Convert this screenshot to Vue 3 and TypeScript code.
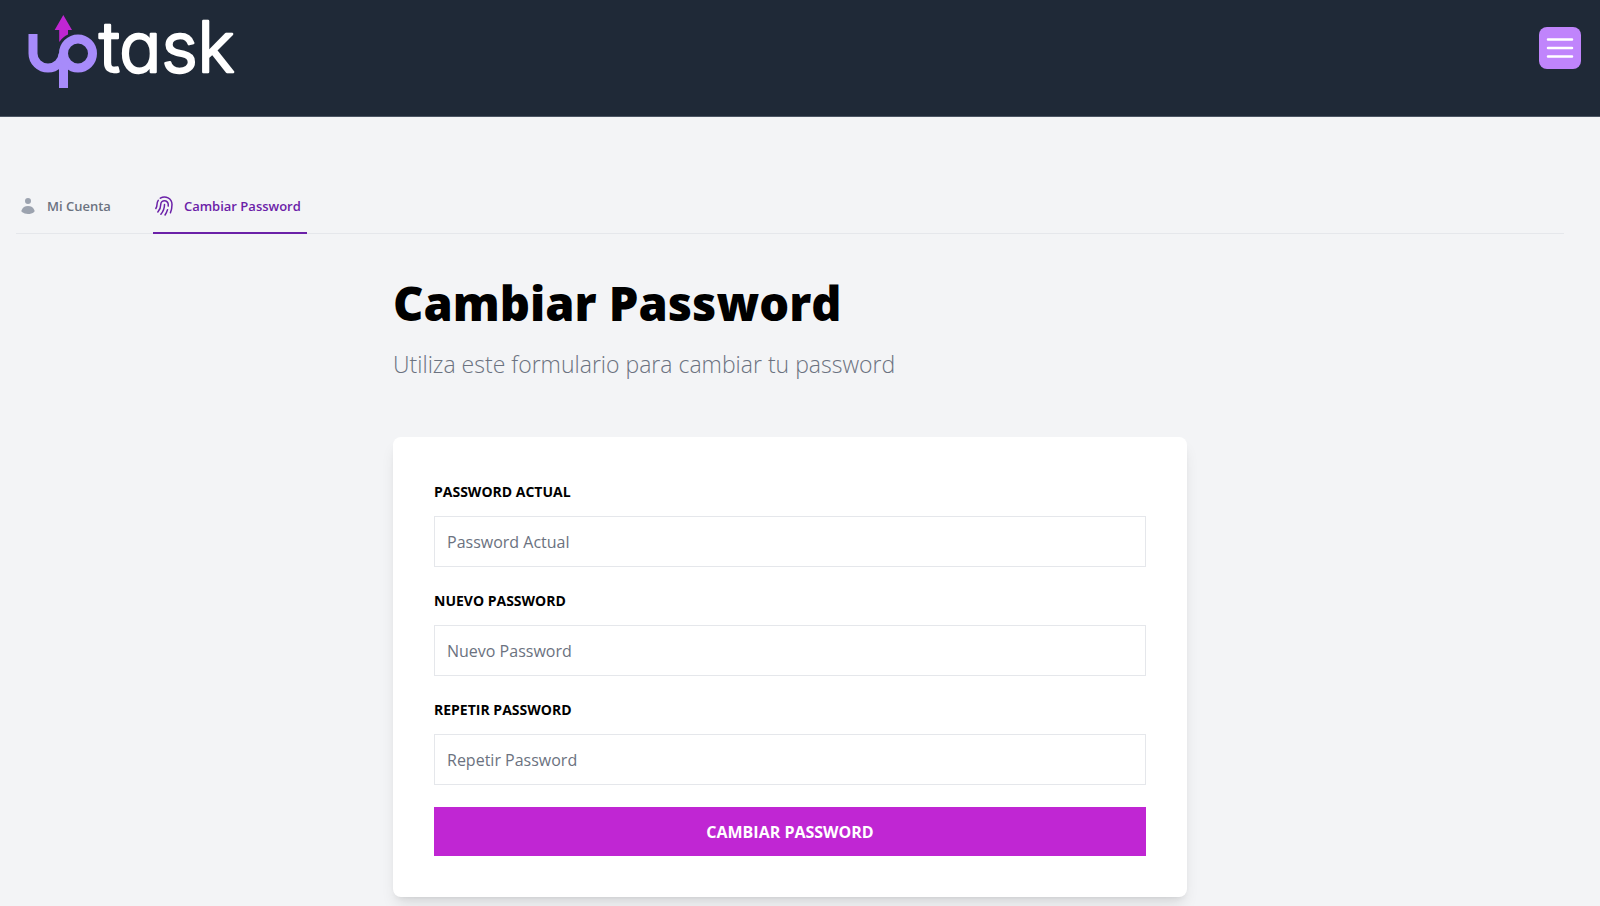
<script setup lang="ts">
import { reactive, ref } from 'vue'

interface Field {
  id: 'current' | 'next' | 'repeat'
  label: string
}

const fields: Field[] = [
  { id: 'current', label: 'Password Actual' },
  { id: 'next', label: 'Nuevo Password' },
  { id: 'repeat', label: 'Repetir Password' },
]

const form = reactive({ current: '', next: '', repeat: '' })
const menuOpen = ref(false)
</script>

<template>
  <div class="page">
    <header class="header">
      <a class="brand" href="#" aria-label="UpTask">
        <svg width="230" height="98" viewBox="24 0 230 98">
          <g fill="none" stroke="#a78bfa" stroke-width="9">
            <path d="M33 34v19.500a15 14.500 0 0 0 30 0" />
            <path d="M63.500 88V53.500" />
            <ellipse cx="78" cy="53.500" rx="14.500" ry="14.500" />
          </g>
          <path d="M63.300 15 72 30h-4v4.500q-5 2-8.800 7.500V30h-4.500z" fill="#c026d3" />
          <text class="wordmark" x="99" y="72">task</text>
        </svg>
      </a>
      <button class="menu" type="button" aria-label="Menú" :aria-expanded="menuOpen" @click="menuOpen = !menuOpen">
        <svg width="34" height="34" viewBox="0 0 34 34" fill="none" stroke="#fff" stroke-width="2.5" stroke-linecap="round">
          <path d="M5 8.500h24M5 17h24M5 25.500h24" />
        </svg>
      </button>
    </header>

    <main class="main">
      <nav class="tabs">
        <a class="tab" href="#">
          <svg width="20" height="20" viewBox="0 0 20 20" fill="#9ca3af">
            <path d="M10 8a3 3 0 1 0 0-6 3 3 0 0 0 0 6ZM3.465 14.493a1.230 1.230 0 0 0 .41 1.412A9.957 9.957 0 0 0 10 18c2.310 0 4.438-.784 6.131-2.100.43-.333.604-.903.408-1.410a7.002 7.002 0 0 0-13.074.003Z" />
          </svg>
          Mi Cuenta
        </a>
        <a class="tab active" href="#" aria-current="page">
          <svg width="20" height="20" viewBox="2.500 2 20 20" fill="none" stroke="#6b21a8" stroke-width="1.500" stroke-linecap="round" stroke-linejoin="round">
            <path d="M7.864 4.243A7.500 7.500 0 0 1 19.500 10.500c0 2.920-.556 5.709-1.568 8.268M5.742 6.364A7.465 7.465 0 0 0 4.500 10.500a7.464 7.464 0 0 1-1.150 3.993m1.989 3.559A11.209 11.209 0 0 0 8.250 10.500a3.750 3.750 0 1 1 7.500 0c0 .527-.021 1.049-.064 1.565M12 10.500a14.940 14.940 0 0 1-3.600 9.750m6.633-4.596a18.666 18.666 0 0 1-2.485 5.330" />
          </svg>
          Cambiar Password
        </a>
      </nav>

      <section class="content">
        <h1>Cambiar Password</h1>
        <p class="intro">Utiliza este formulario para cambiar tu password</p>
        <form class="card" @submit.prevent>
          <div v-for="field in fields" :key="field.id" class="field">
            <label :for="field.id">{{ field.label }}</label>
            <input :id="field.id" v-model="form[field.id]" type="password" :placeholder="field.label" />
          </div>
          <button class="submit" type="submit">Cambiar Password</button>
        </form>
      </section>
    </main>
  </div>
</template>

<style>
body {
  margin: 0;
  background: #f3f4f6;
}
</style>

<style scoped>
.page {
  min-height: 100vh;
  box-sizing: border-box;
  background: #f3f4f6;
  color: #000;
  font-family: 'Open Sans', 'Noto Sans', sans-serif;
}

.page * {
  box-sizing: border-box;
}

.header {
  display: flex;
  align-items: flex-start;
  justify-content: space-between;
  padding: 0 19px 18px 24px;
  border-bottom: 1px solid #4b5563;
  background: #1f2937;
}

.brand,
.brand svg,
.menu svg {
  display: block;
}

.brand svg {
  overflow: visible;
}

.wordmark {
  font-family: Inter, sans-serif;
  font-size: 70px;
  font-weight: 300;
  font-feature-settings: 'cv11';
  fill: #fff;
  stroke: #fff;
  stroke-width: 2.5;
  stroke-linejoin: round;
}

.menu {
  margin-top: 27px;
  padding: 4px;
  border: 0;
  border-radius: 8px;
  background: #c084fc;
  cursor: pointer;
}

.main {
  padding: 67px 36px 8px 16px;
}

.tabs {
  display: flex;
  gap: 36px;
  border-bottom: 1px solid #e5e7eb;
}

.tab {
  display: flex;
  align-items: center;
  gap: 9px;
  height: 50px;
  margin-bottom: -1px;
  padding: 0 6px 4px 2px;
  border-bottom: 2px solid transparent;
  color: #6b7280;
  font-size: 13px;
  font-weight: 600;
  text-decoration: none;
}

.tab.active {
  border-color: #6b21a8;
  color: #6b21a8;
}

.content {
  max-width: 794px;
  margin: 0 auto;
  padding-top: 39px;
}

h1 {
  margin: 0;
  font-size: 47px;
  font-weight: 800;
  line-height: 60px;
}

.intro {
  margin: 13px 0 0;
  color: #6b7280;
  font-size: 23px;
  font-weight: 300;
  line-height: 36px;
}

.card {
  display: grid;
  gap: 20px;
  margin-top: 55px;
  padding: 41px;
  border-radius: 8px;
  background: #fff;
  box-shadow: 0 10px 15px -3px rgb(0 0 0 / 10%), 0 4px 6px -4px rgb(0 0 0 / 10%);
}

.field {
  display: grid;
  gap: 10px;
}

label {
  font-size: 14px;
  font-weight: 700;
  line-height: 28px;
  text-transform: uppercase;
}

input {
  width: 100%;
  height: 51px;
  padding: 0 12px;
  border: 1px solid #e5e7eb;
  background: #fff;
  color: #000;
  font-family: inherit;
  font-size: 16px;
}

input::placeholder {
  color: #6b7280;
  opacity: 1;
}

.submit {
  height: 49px;
  margin-top: 2px;
  border: 0;
  background: #c026d3;
  color: #fff;
  font-family: inherit;
  font-size: 16px;
  font-weight: 700;
  text-transform: uppercase;
  cursor: pointer;
}
</style>
